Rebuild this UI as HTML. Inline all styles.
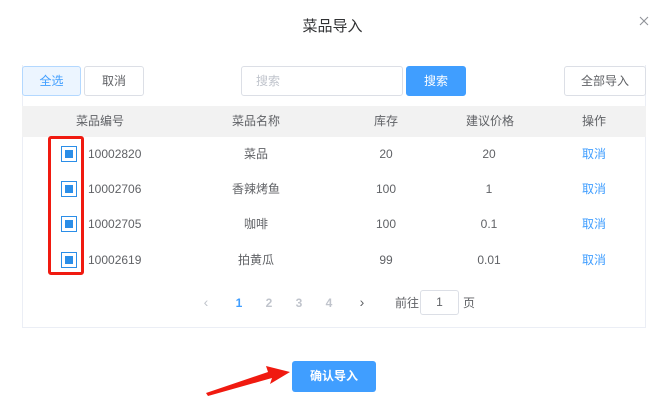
<!DOCTYPE html>
<html><head><meta charset="utf-8"><style>
*{margin:0;padding:0;box-sizing:border-box}
body{width:665px;height:408px;background:#fff;font-family:"Liberation Sans","Noto Sans CJK SC",sans-serif;font-size:12px;color:#606266;position:relative;overflow:hidden}
.a{position:absolute;line-height:16px;height:16px}
.btn{position:absolute;border:1px solid #dcdfe6;border-radius:3px;text-align:center;line-height:28px;font-size:12px;color:#606266;background:#fff}
.c{position:absolute;transform:translateX(-50%);white-space:nowrap;line-height:16px;height:16px}
.cb{position:absolute;left:61px;width:16px;height:16px;border:1px solid #2b8ee8;background:#fff}
.cb i{position:absolute;left:3px;top:3px;width:8px;height:8px;background:#2b8ee8}
</style></head><body>
<div class="a" style="left:0;width:665px;top:17px;height:20px;line-height:20px;text-align:center;font-size:15px;color:#303133">菜品导入</div>
<svg class="a" style="left:639px;top:16px" width="10" height="10"><path d="M1 1L9 9M9 1L1 9" stroke="#909399" stroke-width="1.1"/></svg>
<div class="a" style="left:22px;top:65px;width:624px;height:263px;border:1px solid #ebeef5;border-top:none"></div>
<div class="btn" style="left:22px;top:66px;width:59px;height:30px;background:#ecf5ff;border-color:#b3d8ff;color:#409eff">全选</div>
<div class="btn" style="left:84px;top:66px;width:60px;height:30px">取消</div>
<div class="btn" style="left:241px;top:66px;width:162px;height:30px;text-align:left;padding-left:14px;color:#c0c4cc">搜索</div>
<div class="btn" style="left:406px;top:66px;width:60px;height:30px;background:#409eff;border-color:#409eff;color:#fff">搜索</div>
<div class="btn" style="left:564px;top:66px;width:82px;height:30px">全部导入</div>
<div class="a" style="left:22px;top:106px;width:624px;height:31px;background:#f2f2f2"></div>
<div class="c" style="left:100px;top:113px">菜品编号</div>
<div class="c" style="left:256px;top:113px">菜品名称</div>
<div class="c" style="left:386px;top:113px">库存</div>
<div class="c" style="left:490px;top:113px">建议价格</div>
<div class="c" style="left:594px;top:113px">操作</div>

<div class="cb" style="top:146px"><i></i></div>
<div class="a" style="left:88px;top:146px">10002820</div>
<div class="c" style="left:256px;top:146px">菜品</div>
<div class="c" style="left:386px;top:146px">20</div>
<div class="c" style="left:489px;top:146px">20</div>
<div class="c" style="left:594px;top:146px;color:#409eff">取消</div>

<div class="cb" style="top:181px"><i></i></div>
<div class="a" style="left:88px;top:181px">10002706</div>
<div class="c" style="left:256px;top:181px">香辣烤鱼</div>
<div class="c" style="left:386px;top:181px">100</div>
<div class="c" style="left:489px;top:181px">1</div>
<div class="c" style="left:594px;top:181px;color:#409eff">取消</div>

<div class="cb" style="top:216px"><i></i></div>
<div class="a" style="left:88px;top:216px">10002705</div>
<div class="c" style="left:256px;top:216px">咖啡</div>
<div class="c" style="left:386px;top:216px">100</div>
<div class="c" style="left:489px;top:216px">0.1</div>
<div class="c" style="left:594px;top:216px;color:#409eff">取消</div>

<div class="cb" style="top:252px"><i></i></div>
<div class="a" style="left:88px;top:252px">10002619</div>
<div class="c" style="left:256px;top:252px">拍黄瓜</div>
<div class="c" style="left:386px;top:252px">99</div>
<div class="c" style="left:489px;top:252px">0.01</div>
<div class="c" style="left:594px;top:252px;color:#409eff">取消</div>

<div class="a" style="left:48px;top:136px;width:36px;height:139px;border:3px solid #f01a10;border-radius:3px"></div>

<div class="c" style="left:206px;top:294px;color:#c0c4cc;font-size:14px">‹</div>
<div class="c" style="left:239px;top:295px;color:#409eff;font-weight:bold">1</div>
<div class="c" style="left:269px;top:295px;color:#c0c4cc;font-weight:bold">2</div>
<div class="c" style="left:299px;top:295px;color:#c0c4cc;font-weight:bold">3</div>
<div class="c" style="left:329px;top:295px;color:#c0c4cc;font-weight:bold">4</div>
<div class="c" style="left:362px;top:294px;color:#606266;font-size:14px">›</div>
<div class="a" style="left:395px;top:295px">前往</div>
<div class="btn" style="left:420px;top:290px;width:39px;height:25px;line-height:23px">1</div>
<div class="a" style="left:463px;top:295px">页</div>

<div class="btn" style="left:292px;top:361px;width:84px;height:31px;line-height:31px;background:#409eff;border:none;color:#fff;font-weight:bold">确认导入</div>
<svg class="a" style="left:200px;top:362px;height:40px" width="95" height="40"><polygon points="8,34 72,16 70,22 90,10 66,4 68,10 6,31" fill="#f01a10"/></svg>
</body></html>
